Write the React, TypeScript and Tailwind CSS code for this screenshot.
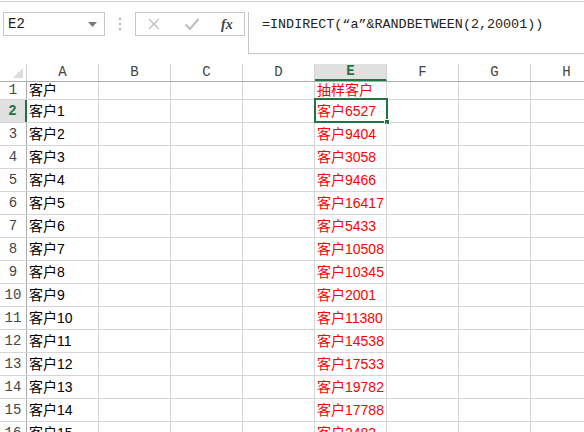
import React from "react"

const columns = ["A", "B", "C", "D", "E", "F", "G", "H"]

const rows: [string, string][] = [
  ["客户", "抽样客户"],
  ["客户1", "客户6527"],
  ["客户2", "客户9404"],
  ["客户3", "客户3058"],
  ["客户4", "客户9466"],
  ["客户5", "客户16417"],
  ["客户6", "客户5433"],
  ["客户7", "客户10508"],
  ["客户8", "客户10345"],
  ["客户9", "客户2001"],
  ["客户10", "客户11380"],
  ["客户11", "客户14538"],
  ["客户12", "客户17533"],
  ["客户13", "客户19782"],
  ["客户14", "客户17788"],
  ["客户15", "客户2482"],
]

const cellFont = { fontFamily: '"Liberation Sans", "Noto Sans CJK SC", sans-serif' }
const monoFont = { fontFamily: '"Liberation Mono", "Noto Sans CJK SC", monospace' }

function Toolbar() {
  return (
    <div className="h-[64px] bg-white pt-[1px]">
      <div className="border-t border-[#d5d5d5] h-[11px]" />
      <div className="flex h-[42px]">
        <div className="ml-[3px] w-[102px] h-[24px] border border-[#c6c6c6] flex items-center justify-between px-[4px]">
          <span className="text-[14px] text-[#222]" style={monoFont}>E2</span>
          <svg width="9" height="5" viewBox="0 0 9 5" className="mr-[3px]">
            <path d="M0 0 L9 0 L4.5 5 Z" fill="#7a7a7a" />
          </svg>
        </div>
        <div className="w-[30px] h-[24px] flex flex-col items-center justify-center gap-[3px]">
          <div className="w-[2px] h-[2px] bg-[#b5b5b5]" />
          <div className="w-[2px] h-[2px] bg-[#b5b5b5]" />
          <div className="w-[2px] h-[2px] bg-[#b5b5b5]" />
        </div>
        <div className="w-[110px] h-[24px] border border-[#c6c6c6] flex items-center">
          <svg width="14" height="14" viewBox="0 0 14 14" className="ml-[11px]">
            <path d="M2 2 L12 12 M12 2 L2 12" stroke="#bdbdbd" strokeWidth="1.3" />
          </svg>
          <svg width="16" height="14" viewBox="0 0 16 14" className="ml-[23px]">
            <path d="M1.5 7.5 L6 12 L14.5 2" stroke="#bdbdbd" strokeWidth="2" fill="none" />
          </svg>
          <span
            className="ml-[21px] text-[14px] italic text-[#444] font-bold"
            style={{ fontFamily: '"Liberation Serif", serif' }}
          >
            fx
          </span>
        </div>
        <div className="ml-[3px] flex-1 border-l border-b border-[#c6c6c6] -mt-[0px]">
          <div
            className="pl-[13px] pt-[3px] text-[13.4px] text-[#222] whitespace-nowrap"
            style={monoFont}
          >
            =INDIRECT(“a”&amp;RANDBETWEEN(2,20001))
          </div>
        </div>
      </div>
    </div>
  )
}

function HeaderRow() {
  return (
    <div className="flex h-[18px] border-b border-[#ababab]">
      <div className="w-[27px] shrink-0 border-r border-[#d5d5d5] relative">
        <svg width="10" height="10" viewBox="0 0 10 10" className="absolute right-[3px] bottom-[3px]">
          <path d="M10 0 L10 10 L0 10 Z" fill="#dcdcdc" />
        </svg>
      </div>
      {columns.map((c) => {
        const active = c === "E"
        return (
          <div
            key={c}
            className={`w-[72px] shrink-0 border-r border-[#d5d5d5] flex items-center justify-center text-[14px] ${
              active ? "bg-[#e1e1e1] text-[#217346] font-bold border-b-2 border-b-[#217346]" : "text-[#444]"
            }`}
            style={monoFont}
          >
            {c}
          </div>
        )
      })}
    </div>
  )
}

export default function App() {
  return (
    <div className="w-[584px] h-[432px] overflow-hidden bg-white">
      <Toolbar />
      <div className="w-[700px]">
        <HeaderRow />
        {rows.map((row, i) => {
          const n = i + 1
          const selected = n === 2
          return (
            <div
              key={n}
              className={`flex border-b border-[#d5d5d5] ${n === 1 ? "h-[18px]" : "h-[23px]"}`}
            >
              <div
                className={`w-[27px] shrink-0 flex items-center justify-center text-[14px] ${
                  selected
                    ? "bg-[#e1e1e1] text-[#217346] font-bold border-r-2 border-[#217346]"
                    : "text-[#444] border-r border-[#ababab]"
                }`}
                style={monoFont}
              >
                {n}
              </div>
              {columns.map((c) => {
                let content = ""
                if (c === "A") content = row[0]
                if (c === "E") content = row[1]
                return (
                  <div
                    key={c}
                    className={`w-[72px] shrink-0 border-r border-[#d5d5d5] relative flex items-center pl-[2px] text-[14px] whitespace-nowrap ${
                      c === "E" ? "text-[#ff0000]" : "text-black"
                    }`}
                    style={cellFont}
                  >
                    {content}
                    {c === "E" && selected && (
                      <div className="absolute -left-[1px] -top-[2px] -right-[2px] -bottom-[1px] border-2 border-[#217346]">
                        <div className="absolute -right-[4px] -bottom-[4px] w-[6px] h-[6px] bg-[#217346] border border-white" />
                      </div>
                    )}
                  </div>
                )
              })}
            </div>
          )
        })}
      </div>
    </div>
  )
}
